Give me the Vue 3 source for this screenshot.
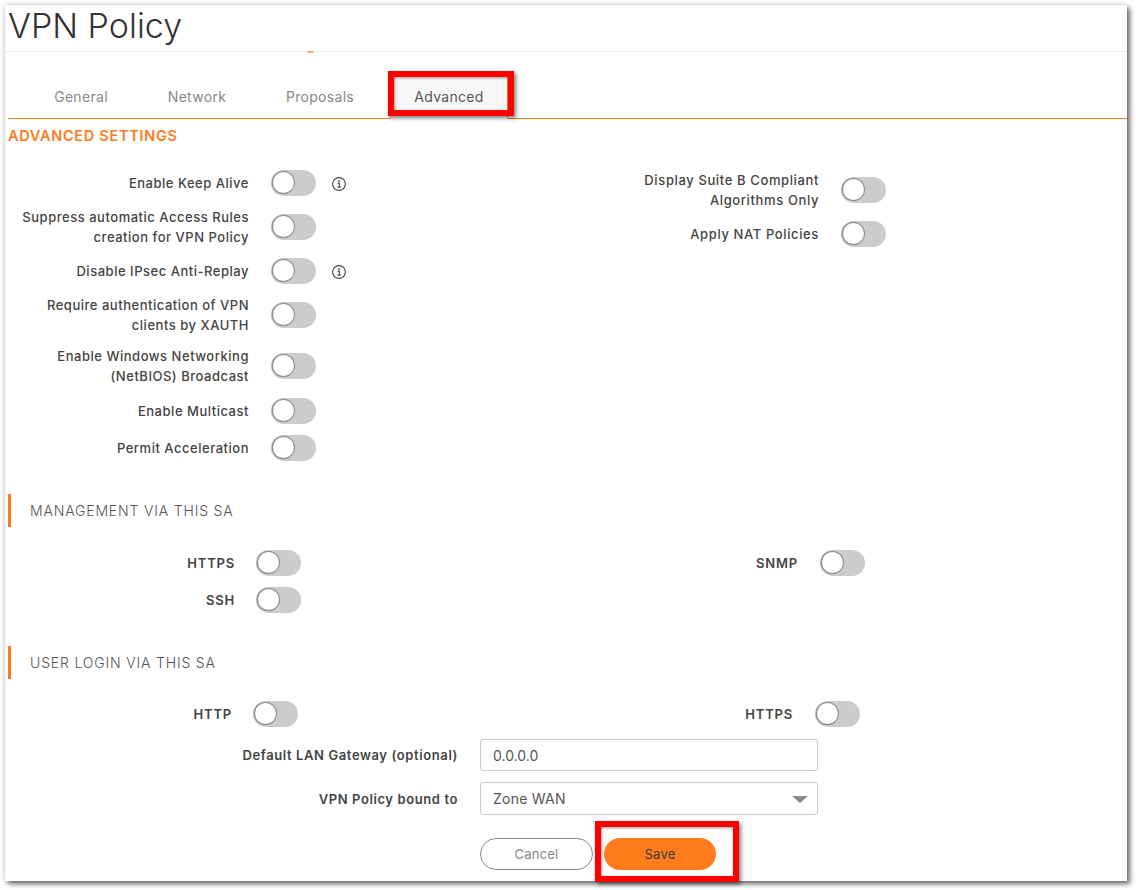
<script setup>
const leftRows = [
  { label: ['Enable Keep Alive'], info: true },
  { label: ['Suppress automatic Access Rules', 'creation for VPN Policy'] },
  { label: ['Disable IPsec Anti-Replay'], info: true },
  { label: ['Require authentication of VPN', 'clients by XAUTH'] },
  { label: ['Enable Windows Networking', '(NetBIOS) Broadcast'] },
  { label: ['Enable Multicast'], extra: true },
  { label: ['Permit Acceleration'] }
]
const rightRows = [
  { label: ['Display Suite B Compliant', 'Algorithms Only'] },
  { label: ['Apply NAT Policies'] }
]
const tabs = ['General', 'Network', 'Proposals', 'Advanced']
</script>

<template>
  <div class="page">
    <div class="panel">
      <header class="head"><h1>VPN Policy</h1><span class="tick"></span></header>

      <nav class="tabs">
        <div v-for="t in tabs" :key="t" class="tab" :class="['tab-' + t.toLowerCase(), { active: t === 'Advanced' }]">{{ t }}</div>
        <span class="mark mark-tab"></span>
      </nav>

      <h2 class="adv">ADVANCED SETTINGS</h2>

      <div class="cols first">
        <div class="stack">
          <div v-for="r in leftRows" :key="r.label[0]" class="row lab-a" :class="{ extra: r.extra }">
            <div class="lbl"><div v-for="l in r.label" :key="l">{{ l }}</div></div>
            <span class="toggle"><i></i></span>
            <svg v-if="r.info" class="info" width="16" height="16" viewBox="0 0 16 16">
              <circle cx="8" cy="8" r="6.4" fill="none" stroke="#444" stroke-width="1.1" />
              <path d="M6.6 7.1H8.3V11M6.5 11.1H9.7" fill="none" stroke="#444" stroke-width="1.1" />
              <circle cx="8" cy="4.9" r=".9" fill="#444" />
            </svg>
          </div>
        </div>
        <div class="stack">
          <div v-for="r in rightRows" :key="r.label[0]" class="row lab-b">
            <div class="lbl"><div v-for="l in r.label" :key="l">{{ l }}</div></div>
            <span class="toggle"><i></i></span>
          </div>
        </div>
      </div>

      <div class="section">MANAGEMENT VIA THIS SA</div>
      <div class="cols second">
        <div class="stack">
          <div class="row lab-c"><div class="lbl">HTTPS</div><span class="toggle"><i></i></span></div>
          <div class="row lab-c"><div class="lbl">SSH</div><span class="toggle"><i></i></span></div>
        </div>
        <div class="stack">
          <div class="row lab-d"><div class="lbl">SNMP</div><span class="toggle"><i></i></span></div>
        </div>
      </div>

      <div class="section">USER LOGIN VIA THIS SA</div>
      <div class="cols third">
        <div class="row lab-e"><div class="lbl">HTTP</div><span class="toggle"><i></i></span></div>
        <div class="row lab-f"><div class="lbl">HTTPS</div><span class="toggle"><i></i></span></div>
      </div>

      <div class="field f1">
        <label class="flbl">Default LAN Gateway (optional)</label>
        <input class="ctl plain" value="0.0.0.0" />
      </div>
      <div class="field f2">
        <label class="flbl">VPN Policy bound to</label>
        <div class="sel">
          <select class="ctl"><option>Zone WAN</option></select>
          <span class="caret"></span>
        </div>
      </div>

      <div class="actions">
        <button class="btn cancel">Cancel</button>
        <div class="save-wrap">
          <button class="btn save">Save</button>
          <span class="mark mark-save"></span>
        </div>
      </div>
    </div>
  </div>
</template>

<style>
html, body { margin: 0; background: #fff; }
</style>

<style scoped>
.page {
  width: 1136px;
  height: 890px;
  padding: 5px 0 0 5px;
  box-sizing: border-box;
  overflow: hidden;
  font-family: Inter, "Open Sans", sans-serif;
  color: #444;
}
.panel {
  width: 1122px;
  height: 876px;
  background: #fff;
  box-shadow: 3px 3px 5px rgba(0, 0, 0, .55), 0 0 5px rgba(0, 0, 0, .22);
  padding-left: 3px;
  box-sizing: border-box;
}
.head {
  position: relative;
  height: 46px;
  margin-left: -3px;
  padding-left: 3px;
  border-bottom: 1px solid #ececec;
}
h1 {
  margin: 0;
  font-size: 34px;
  font-weight: 300;
  line-height: 42px;
  color: #333;
}
.tick {
  position: absolute;
  left: 302px;
  top: 46px;
  width: 7px;
  height: 2px;
  border-radius: 0 0 4px 4px;
  background: #f5a870;
}
.tabs {
  position: relative;
  display: flex;
  height: 67px;
  box-sizing: border-box;
  border-bottom: 1px solid #ff7b1c;
}
.tab {
  position: absolute;
  bottom: -1px;
  height: 44px;
  line-height: 44px;
  box-sizing: border-box;
  text-align: center;
  font-size: 14px;
  letter-spacing: .3px;
  color: #888;
}
.tab-general { left: 26px; width: 94px; }
.tab-network { left: 142px; width: 94px; }
.tab-proposals { left: 265px; width: 94px; }
.tab-advanced {
  left: 382px;
  width: 118px;
  background: #f8f8f8;
  color: #555;
  border-left: 1px solid #ff7b1c;
  border-right: 1px solid #ff7b1c;
  border-bottom: 1px solid #f8f8f8;
}
.mark {
  position: absolute;
  border: 6px solid #f00;
  box-sizing: border-box;
  box-shadow: 2px 2px 4px rgba(0, 0, 0, .5), inset 1px 1px 3px rgba(0, 0, 0, .4);
  pointer-events: none;
}
.mark-tab { left: 380px; top: 19px; width: 126px; height: 45px; }
.adv {
  margin: 7px 0 0;
  height: 20px;
  line-height: 20px;
  font-size: 14.5px;
  font-weight: 600;
  letter-spacing: .7px;
  color: #ff7b1c;
}
.cols { display: flex; }
.first { margin-top: 24px; }
.first > .stack:first-child { width: 570px; }
.second { margin-top: 23px; }
.second > .stack:first-child { width: 565px; }
.third { margin-top: 22px; }
.third > .row:first-child { width: 564px; }
.stack { display: flex; flex-direction: column; gap: 11px; }
.row {
  display: flex;
  align-items: center;
  min-height: 26px;
  font-size: 13px;
  line-height: 20px;
  font-weight: 500;
  letter-spacing: .52px;
  color: #444;
}
.extra { margin-top: 1px; }
.lbl { text-align: right; flex: none; white-space: nowrap; }
.lab-a .lbl { width: 241px; }
.lab-a .toggle { margin-left: 22px; }
.lab-b .lbl { width: 241px; letter-spacing: .62px; }
.lab-b .toggle { margin-left: 22px; }
.lab-c .lbl { width: 227px; font-weight: 600; letter-spacing: .8px; }
.lab-c .toggle { margin-left: 21px; }
.lab-d .lbl { width: 225px; font-weight: 600; letter-spacing: .8px; }
.lab-d .toggle { margin-left: 22px; }
.lab-e .lbl { width: 224px; font-weight: 600; letter-spacing: .8px; }
.lab-e .toggle { margin-left: 21px; }
.lab-f .lbl { width: 221px; font-weight: 600; letter-spacing: .8px; }
.lab-f .toggle { margin-left: 22px; }
.toggle {
  flex: none;
  display: block;
  width: 45px;
  height: 26px;
  border-radius: 13px;
  background: #ccc;
  position: relative;
}
.toggle i {
  position: absolute;
  left: 2px;
  top: 2px;
  width: 21px;
  height: 21px;
  border-radius: 50%;
  background: #fff;
  box-shadow: 0 0 0 1px #8d8d8d, -1px 0 2px rgba(0, 0, 0, .35);
}
.info { margin: 1px 0 0 15px; flex: none; }
.section {
  margin-top: 33px;
  height: 33px;
  line-height: 33px;
  border-left: 3px solid #ff7b1c;
  padding-left: 19px;
  font-size: 14px;
  font-weight: 300;
  letter-spacing: .83px;
  color: #555;
}
.field { display: flex; align-items: center; }
.f1 { margin-top: 12px; height: 32px; }
.f2 { margin-top: 11px; height: 33px; }
.flbl {
  width: 450px;
  text-align: right;
  flex: none;
  font-size: 13px;
  font-weight: 600;
  letter-spacing: .6px;
  color: #444;
}
.ctl {
  display: block;
  width: 338px;
  height: 100%;
  margin-left: 22px;
  padding: 0 12px;
  box-sizing: border-box;
  border: 1px solid #ccc;
  border-radius: 3px;
  background: #fff;
  font: 400 14px Inter, "Open Sans", sans-serif;
  letter-spacing: .25px;
  color: #555;
  outline: none;
  appearance: none;
}
.plain { letter-spacing: 0; }
.sel { position: relative; height: 33px; }
.caret {
  position: absolute;
  right: 10px;
  top: 14px;
  border-left: 8px solid transparent;
  border-right: 8px solid transparent;
  border-top: 7px solid #888;
}
.actions {
  display: flex;
  gap: 11px;
  margin: 23px 0 0 472px;
}
.btn {
  display: block;
  width: 113px;
  height: 32px;
  border-radius: 16px;
  font: 400 13px Inter, "Open Sans", sans-serif;
  letter-spacing: .2px;
  padding: 0;
  box-sizing: border-box;
}
.cancel {
  background: #fff;
  border: 1px solid #8a8a8a;
  color: #888;
}
.save {
  width: 112px;
  background: #ff7b1c;
  border: 0;
  color: #3c3c3c;
}
.save-wrap { position: relative; }
.mark-save { left: -9px; top: -17px; width: 144px; height: 61px; }
</style>
